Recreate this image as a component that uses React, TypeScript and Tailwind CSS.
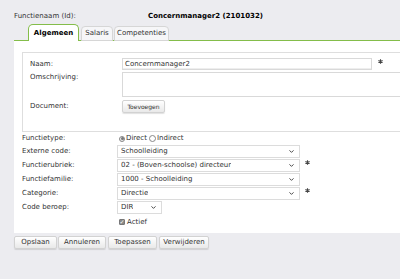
import { ChevronDown } from 'lucide-react';

function Star({ className = '' }: { className?: string }) {
  return (
    <svg
      width="5"
      height="5"
      viewBox="0 0 10 10"
      className={className}
      aria-hidden
    >
      <path
        d="M5 0.5V9.5M0.8 2.8L9.2 7.2M0.8 7.2L9.2 2.8"
        stroke="#444"
        strokeWidth="2.2"
      />
    </svg>
  );
}

function Select({ value, width }: { value: string; width: string }) {
  return (
    <div
      className={`flex h-[13px] items-center justify-between border border-[#dcdcdc] bg-white pl-[3px] pr-[4px] ${width}`}
    >
      <span className="truncate">{value}</span>
      <ChevronDown size={7} strokeWidth={3} className="shrink-0 text-[#333]" />
    </div>
  );
}

function Btn({ label, width }: { label: string; width: string }) {
  return (
    <button
      type="button"
      className={`h-[13px] rounded-[2px] border border-[#d2d2d2] bg-gradient-to-b from-white to-[#e9e9e9] text-[#333] shadow-[0_1px_1px_rgba(0,0,0,0.12)] ${width}`}
    >
      {label}
    </button>
  );
}

const rows = [
  { label: 'Externe code:', value: 'Schoolleiding', star: false },
  { label: 'Functierubriek:', value: '02 - (Boven-schoolse) directeur', star: true },
  { label: 'Functiefamilie:', value: '1000 - Schoolleiding', star: false },
  { label: 'Categorie:', value: 'Directie', star: true },
];

export default function App() {
  return (
    <div className="h-[279px] w-[400px] overflow-hidden bg-[#ececf0] pl-[14px] pt-[11px] font-['DejaVu_Sans',sans-serif] text-[7px] text-[#333]">
      <div className="flex h-[11px] items-center">
        <span className="w-[134px]">Functienaam (Id):</span>
        <span className="font-bold text-black">Concernmanager2 (2101032)</span>
      </div>

      <div className="mt-[2px] flex h-[17px] items-end border-b border-[#84bd4a] pl-[14px]">
        <div className="-mb-px flex h-[17px] w-[51px] items-center justify-center rounded-t-[5px] border border-b-0 border-[#84bd4a] bg-white font-bold text-black">
          Algemeen
        </div>
        <div className="-mb-px ml-[2px] flex h-[15px] w-[32px] items-center justify-center rounded-t-[4px] border border-[#d6d6d6] bg-[#f6f6f8]">
          Salaris
        </div>
        <div className="-mb-px ml-[1px] flex h-[15px] w-[55px] items-center justify-center rounded-t-[4px] border border-[#d6d6d6] bg-[#f6f6f8]">
          Competenties
        </div>
      </div>

      <div className="h-[192px] bg-white pl-[8px] pt-[11px]">
        <div className="h-[80px] border border-r-0 border-[#dedede] pl-[7px] pt-[5px]">
          <div className="flex h-[14px] items-start">
            <span className="w-[92px] pt-[1px]">Naam:</span>
            <div className="flex h-[12px] w-[250px] items-center border border-[#d9d9d9] pl-[2px] shadow-[inset_0_-1px_0_#eee]">
              Concernmanager2
            </div>
            <Star className="ml-[6px] mt-[1px]" />
          </div>
          <div className="flex h-[28px] items-start">
            <span className="w-[92px]">Omschrijving:</span>
            <div className="h-[25px] flex-1 border border-r-0 border-[#d9d9d9]" />
          </div>
          <div className="flex items-center">
            <span className="w-[92px]">Document:</span>
            <Btn label="Toevoegen" width="w-[43px] text-[6px]" />
          </div>
        </div>

        <div className="flex h-[13px] items-center">
          <span className="w-[95px]">Functietype:</span>
          <span className="ml-[2px] flex h-[6px] w-[6px] items-center justify-center rounded-full border border-[#888] bg-[#eee]">
            <span className="h-[3px] w-[3px] rounded-full bg-[#777]" />
          </span>
          <span className="ml-[1px]">Direct</span>
          <span className="ml-[2px] h-[7px] w-[7px] rounded-full border border-[#888] bg-white" />
          <span className="ml-[1px]">Indirect</span>
        </div>

        {rows.map((r) => (
          <div key={r.label} className="mb-[1px] flex items-start">
            <span className="w-[95px] pt-[1px]">{r.label}</span>
            <Select value={r.value} width="w-[183px]" />
            {r.star && <Star className="ml-[5px] mt-[1px]" />}
          </div>
        ))}

        <div className="flex items-center">
          <span className="w-[95px]">Code beroep:</span>
          <Select value="DIR" width="w-[45px]" />
        </div>
        <div className="mt-[3px] flex items-center pl-[97px]">
          <span className="flex h-[6px] w-[6px] items-center justify-center rounded-[1px] border border-[#777] bg-[#888] text-[6px] leading-none text-white">
            ✓
          </span>
          <span className="ml-[2px]">Actief</span>
        </div>
      </div>

      <div className="mt-[3px] flex gap-[1px]">
        <Btn label="Opslaan" width="w-[43px]" />
        <Btn label="Annuleren" width="w-[48px]" />
        <Btn label="Toepassen" width="w-[49px] ml-[1px]" />
        <Btn label="Verwijderen" width="w-[50px] ml-[1px]" />
      </div>
    </div>
  );
}
